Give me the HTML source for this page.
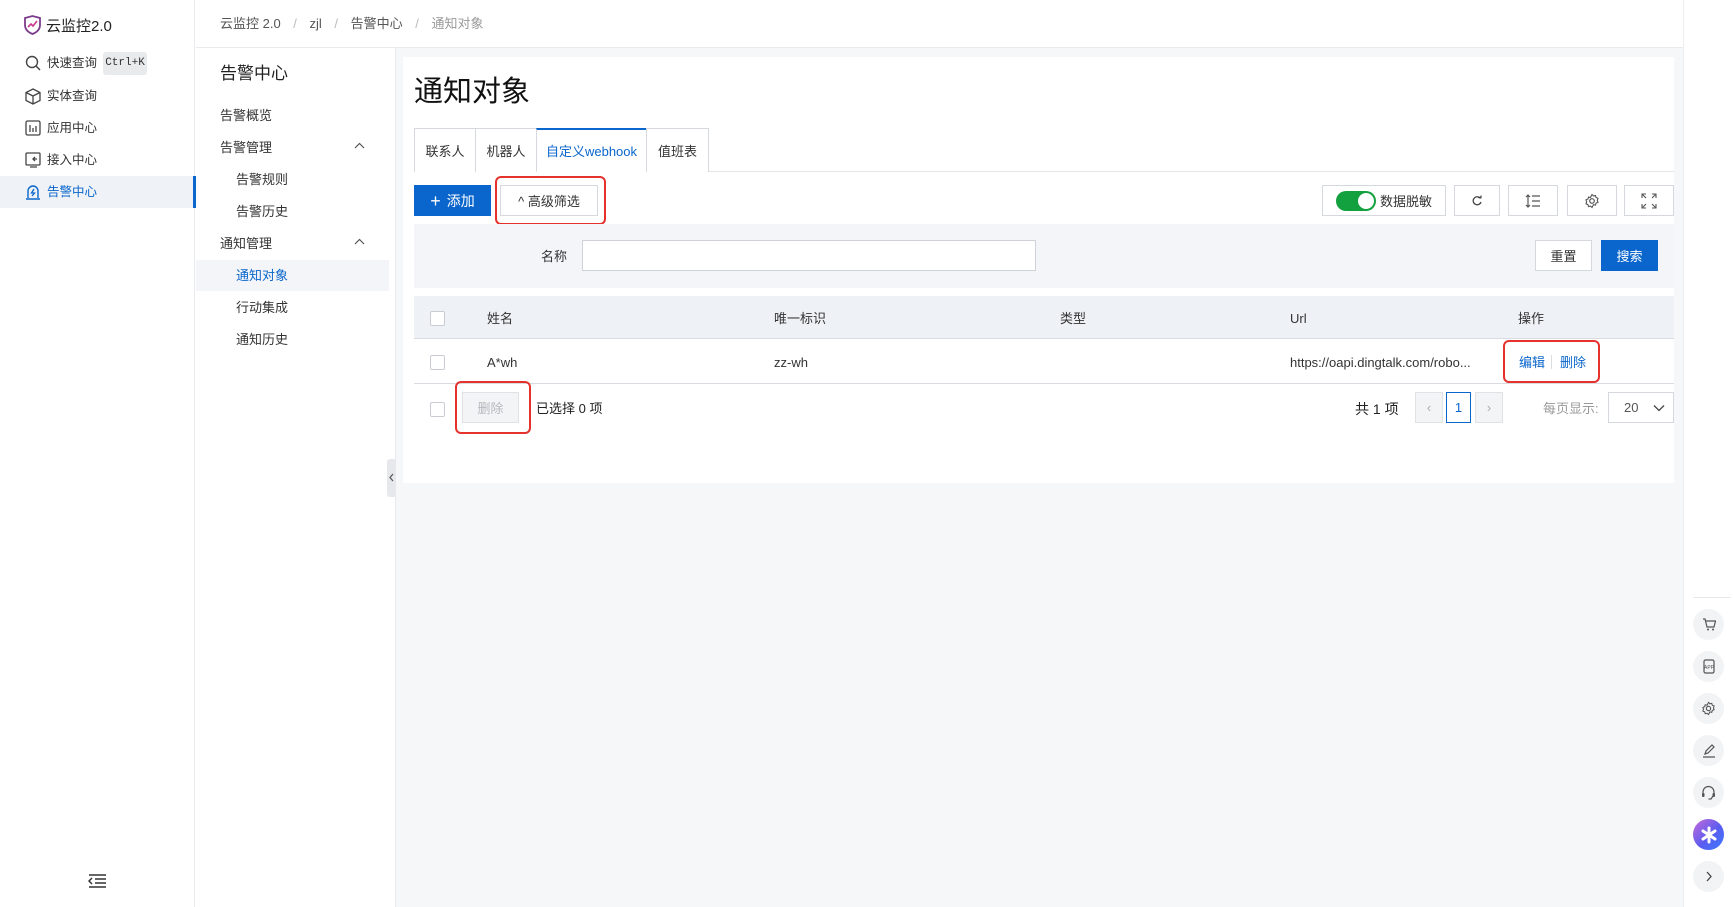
<!DOCTYPE html>
<html><head><meta charset="utf-8"><style>
*{box-sizing:border-box;margin:0;padding:0}
body{width:1733px;height:907px;overflow:hidden;background:#fff;font-family:"Liberation Sans","Noto Sans CJK SC",sans-serif;font-size:13px;color:#333;position:relative}
.a{position:absolute}
.t{position:absolute;white-space:nowrap;line-height:1}
.btn{position:absolute;border:1px solid #d5d8dd;background:#fff;display:flex;align-items:center;justify-content:center;font-size:13px;color:#333}
.red{position:absolute;border:2px solid #e5322d;border-radius:6px}
.cb{position:absolute;width:15px;height:15px;border:1px solid #c9ccd2;background:#fff;border-radius:2px}
.ri{position:absolute;left:1693px;width:31px;height:31px;border-radius:50%;background:#f2f3f5;display:flex;align-items:center;justify-content:center}
.sb{font-size:12.5px}
</style></head><body>
<!-- left sidebar -->
<div class="a" style="left:0;top:0;width:195px;height:907px;background:#fff;border-right:1px solid #e8eaed"></div>
<svg class="a" style="left:23px;top:15px" width="19" height="20" viewBox="0 0 19 20"><path d="M2 3 L9.5 1 L17 3 L17 10 Q17 16 9.5 19 Q2 16 2 10Z" fill="none" stroke="#7b3c8c" stroke-width="1.8"/><path d="M5 12 L8 9 L10 11 L14 6" fill="none" stroke="#c9398b" stroke-width="1.6"/></svg>
<div class="t" style="left:46px;top:19px;font-size:15px;color:#222">云监控2.0</div>
<svg class="a" style="left:25px;top:55px" width="16" height="16" viewBox="0 0 16 16"><circle cx="7" cy="7" r="5.5" fill="none" stroke="#444" stroke-width="1.4"/><path d="M11 11l4 4" stroke="#444" stroke-width="1.5"/></svg>
<div class="t sb" style="left:47px;top:57px">快速查询</div>
<div class="a" style="left:103px;top:52px;width:44px;height:23px;background:#e9eaec;border-radius:3px;font-family:'Liberation Mono',monospace;font-size:11px;line-height:23px;text-align:center">Ctrl+K</div>
<svg class="a" style="left:25px;top:88px" width="16" height="17" viewBox="0 0 16 17"><path d="M8 1L15 4.5V12.5L8 16L1 12.5V4.5Z M1 4.5L8 8L15 4.5 M8 8V16" fill="none" stroke="#444" stroke-width="1.3"/></svg>
<div class="t sb" style="left:47px;top:90px">实体查询</div>
<svg class="a" style="left:25px;top:120px" width="16" height="16" viewBox="0 0 16 16"><rect x="1" y="1" width="14" height="14" rx="1.5" fill="none" stroke="#444" stroke-width="1.3"/><path d="M5 5v7M8 8v4M11 6v6" stroke="#444" stroke-width="1.3"/></svg>
<div class="t sb" style="left:47px;top:122px">应用中心</div>
<svg class="a" style="left:25px;top:152px" width="17" height="16" viewBox="0 0 17 16"><rect x="1" y="1" width="14" height="12" rx="1" fill="none" stroke="#444" stroke-width="1.3"/><path d="M5 15h7M12 7H8M10 5l-2 2 2 2" fill="none" stroke="#444" stroke-width="1.3"/></svg>
<div class="t sb" style="left:47px;top:154px">接入中心</div>
<div class="a" style="left:0;top:176px;width:195px;height:32px;background:#eff2f7"></div>
<div class="a" style="left:193px;top:176px;width:3px;height:32px;background:#0a66cc"></div>
<svg class="a" style="left:25px;top:183px" width="16" height="18" viewBox="0 0 16 18"><path d="M3 15V8a5 5 0 0 1 10 0v7M1 16h14" fill="none" stroke="#0a66cc" stroke-width="1.4"/><path d="M9 6L6.5 10h3L7 13" fill="none" stroke="#0a66cc" stroke-width="1.3"/></svg>
<div class="t sb" style="left:47px;top:186px;color:#0a66cc">告警中心</div>
<svg class="a" style="left:88px;top:873px" width="19" height="16" viewBox="0 0 19 16"><path d="M1 2h17M7 6h11M7 10h11M1 14h17M4 5L1 8l3 3" fill="none" stroke="#333" stroke-width="1.5"/></svg>
<!-- top breadcrumb -->
<div class="a" style="left:196px;top:47px;width:1487px;height:1px;background:#e8eaed"></div>
<div class="t" style="left:220px;top:17px;color:#555">云监控 2.0 <span style="color:#bbb;margin:0 9px">/</span> zjl <span style="color:#bbb;margin:0 9px">/</span> 告警中心 <span style="color:#bbb;margin:0 9px">/</span> <span style="color:#999">通知对象</span></div>
<!-- second sidebar -->
<div class="a" style="left:395px;top:48px;width:1px;height:859px;background:#e8eaed"></div>
<div class="t" style="left:220px;top:65px;font-size:17px;color:#222">告警中心</div>
<div class="t" style="left:220px;top:109px">告警概览</div>
<div class="t" style="left:220px;top:141px">告警管理</div>
<svg class="a" style="left:354px;top:142px" width="11" height="7"><path d="M1 6l4.5-4.5L10 6" fill="none" stroke="#555" stroke-width="1.2"/></svg>
<div class="t" style="left:236px;top:173px">告警规则</div>
<div class="t" style="left:236px;top:205px">告警历史</div>
<div class="t" style="left:220px;top:237px">通知管理</div>
<svg class="a" style="left:354px;top:238px" width="11" height="7"><path d="M1 6l4.5-4.5L10 6" fill="none" stroke="#555" stroke-width="1.2"/></svg>
<div class="a" style="left:196px;top:260px;width:193px;height:31px;background:#f3f5f9"></div>
<div class="t" style="left:236px;top:269px;color:#0a66cc">通知对象</div>
<div class="t" style="left:236px;top:301px">行动集成</div>
<div class="t" style="left:236px;top:333px">通知历史</div>
<div class="a" style="left:387px;top:459px;width:9px;height:38px;background:#e6e8eb;border-radius:3px 0 0 3px"></div>
<svg class="a" style="left:388px;top:473px" width="7" height="9"><path d="M5 1L2 4.5L5 8" fill="none" stroke="#555" stroke-width="1.2"/></svg>
<!-- main bg -->
<div class="a" style="left:396px;top:48px;width:1287px;height:859px;background:#f6f7f9"></div>
<div class="a" style="left:403px;top:57px;width:1271px;height:426px;background:#fff"></div>
<div class="t" style="left:414px;top:78px;font-size:29px;color:#111">通知对象</div>
<!-- tabs -->
<div class="a" style="left:414px;top:171px;width:1260px;height:1px;background:#e3e5e8"></div>
<div class="btn" style="left:414px;top:128px;width:62px;height:44px;border-bottom:none">联系人</div>
<div class="btn" style="left:475px;top:128px;width:62px;height:44px;border-bottom:none">机器人</div>
<div class="btn" style="left:536px;top:128px;width:111px;height:44px;border-bottom:1px solid #fff;border-top:2px solid #0a66cc;color:#0a66cc">自定义webhook</div>
<div class="btn" style="left:646px;top:128px;width:63px;height:44px;border-bottom:none">值班表</div>
<!-- toolbar -->
<div class="btn" style="left:414px;top:185px;width:77px;height:31px;background:#0a66cc;border-color:#0a66cc;color:#fff;font-size:14px"><span style="font-size:18px;margin-right:6px;line-height:1">+</span>添加</div>
<div class="btn" style="left:500px;top:185px;width:98px;height:31px">^ 高级筛选</div>
<div class="red" style="left:495px;top:176px;width:111px;height:49px"></div>
<div class="btn" style="left:1322px;top:185px;width:124px;height:31px"><span style="display:inline-block;width:40px;height:20px;border-radius:10px;background:#13a03e;position:relative;margin-right:4px"><span style="position:absolute;right:2px;top:2px;width:16px;height:16px;border-radius:50%;background:#fff"></span></span>数据脱敏</div>
<div class="btn" style="left:1454px;top:185px;width:46px;height:31px"><svg width="12" height="12"><path d="M9.5 3.5A4 4 0 1 0 10 7" fill="none" stroke="#444" stroke-width="1.3"/><path d="M7 2.5h3v-2" fill="none" stroke="#444" stroke-width="1.2"/></svg></div>
<div class="btn" style="left:1508px;top:185px;width:50px;height:31px"><svg width="16" height="16"><path d="M3 2v12M1 4l2-2 2 2M1 12l2 2 2-2M7 3h8M7 8h8M7 13h8" fill="none" stroke="#555" stroke-width="1.2"/></svg></div>
<div class="btn" style="left:1567px;top:185px;width:50px;height:31px"><svg width="16" height="16" viewBox="0 0 16 16"><circle cx="8" cy="8" r="2.3" fill="none" stroke="#555" stroke-width="1.2"/><path d="M8 1.5l1.5 1.5 2-.5.5 2 2 .8-.7 2 .7 2-2 .8-.5 2-2-.5L8 14.5l-1.5-1.4-2 .5-.5-2-2-.8.7-2-.7-2 2-.8.5-2 2 .5Z" fill="none" stroke="#555" stroke-width="1.1"/></svg></div>
<div class="btn" style="left:1624px;top:185px;width:50px;height:31px"><svg width="16" height="16"><path d="M1 5V1h4M1 1l4 4M11 1h4v4M15 1l-4 4M1 11v4h4M1 15l4-4M15 11v4h-4M15 15l-4-4" fill="none" stroke="#555" stroke-width="1.1"/></svg></div>
<!-- filter -->
<div class="a" style="left:414px;top:224px;width:1260px;height:64px;background:#f3f5f9"></div>
<div class="t" style="left:541px;top:250px">名称</div>
<div class="a" style="left:582px;top:240px;width:454px;height:31px;background:#fff;border:1px solid #cfd3d9"></div>
<div class="btn" style="left:1535px;top:240px;width:57px;height:31px">重置</div>
<div class="btn" style="left:1601px;top:240px;width:57px;height:31px;background:#0a66cc;border-color:#0a66cc;color:#fff">搜索</div>
<!-- table -->
<div class="a" style="left:414px;top:296px;width:1260px;height:43px;background:#eef1f6;border-bottom:1px solid #d8dbe0"></div>
<div class="cb" style="left:430px;top:311px"></div>
<div class="t" style="left:487px;top:312px">姓名</div>
<div class="t" style="left:774px;top:312px">唯一标识</div>
<div class="t" style="left:1060px;top:312px">类型</div>
<div class="t" style="left:1290px;top:312px">Url</div>
<div class="t" style="left:1518px;top:312px">操作</div>
<div class="a" style="left:414px;top:383px;width:1260px;height:1px;background:#d8dbe0"></div>
<div class="cb" style="left:430px;top:355px"></div>
<div class="t" style="left:487px;top:356px">A*wh</div>
<div class="t" style="left:774px;top:356px">zz-wh</div>
<div class="t" style="left:1290px;top:356px">https://oapi.dingtalk.com/robo...</div>
<div class="t" style="left:1519px;top:356px;color:#0a66cc">编辑</div>
<div class="a" style="left:1551px;top:355px;width:1px;height:14px;background:#ddd"></div>
<div class="t" style="left:1560px;top:356px;color:#0a66cc">删除</div>
<div class="red" style="left:1503px;top:340px;width:97px;height:43px"></div>
<div class="cb" style="left:430px;top:402px"></div>
<div class="btn" style="left:462px;top:392px;width:57px;height:31px;background:#f3f4f6;color:#b5b8bd;border-color:#e0e2e5">删除</div>
<div class="red" style="left:455px;top:381px;width:76px;height:53px"></div>
<div class="t" style="left:536px;top:402px;color:#222">已选择 0 项</div>
<div class="t" style="left:1355px;top:402px;color:#222;font-size:14px">共 1 项</div>
<div class="btn" style="left:1415px;top:392px;width:28px;height:31px;background:#f3f4f6;border-color:#e0e2e5;color:#aaa">‹</div>
<div class="btn" style="left:1446px;top:392px;width:25px;height:31px;border-color:#0a66cc;color:#0a66cc">1</div>
<div class="btn" style="left:1475px;top:392px;width:28px;height:31px;background:#f3f4f6;border-color:#e0e2e5;color:#aaa">›</div>
<div class="t" style="left:1543px;top:402px;color:#999">每页显示:</div>
<div class="btn" style="left:1608px;top:392px;width:66px;height:31px;justify-content:flex-start;padding-left:15px;color:#555">20<svg style="position:absolute;right:8px;top:11px" width="12" height="8"><path d="M1 1.5l5 5 5-5" fill="none" stroke="#444" stroke-width="1.3"/></svg></div>
<!-- right rail -->
<div class="a" style="left:1683px;top:0;width:50px;height:907px;background:#fff;border-left:1px solid #eceef1"></div>
<div class="a" style="left:1693px;top:597px;width:38px;height:1px;background:#e6e8eb"></div>
<div class="ri" style="top:609px"><svg width="14" height="13"><path d="M1 1h2l2 8h7l1.5-6H4" fill="none" stroke="#555" stroke-width="1.2"/><circle cx="6" cy="11.5" r="1" fill="#555"/><circle cx="11" cy="11.5" r="1" fill="#555"/></svg></div>
<div class="ri" style="top:651px"><svg width="14" height="15"><rect x="2" y="1" width="10" height="13" rx="1.5" fill="none" stroke="#555" stroke-width="1.2"/><text x="7" y="10" font-size="5" text-anchor="middle" fill="#555" font-family="Liberation Sans">APP</text></svg></div>
<div class="ri" style="top:693px"><svg width="15" height="15" viewBox="0 0 16 16"><circle cx="8" cy="8" r="2.3" fill="none" stroke="#555" stroke-width="1.2"/><path d="M8 1.5l1.5 1.5 2-.5.5 2 2 .8-.7 2 .7 2-2 .8-.5 2-2-.5L8 14.5l-1.5-1.4-2 .5-.5-2-2-.8.7-2-.7-2 2-.8.5-2 2 .5Z" fill="none" stroke="#555" stroke-width="1.1"/></svg></div>
<div class="ri" style="top:735px"><svg width="14" height="14"><path d="M3 10l1-3 6-6 2 2-6 6zM1 13h12" fill="none" stroke="#555" stroke-width="1.2"/></svg></div>
<div class="ri" style="top:777px"><svg width="15" height="15"><path d="M2 9V7a5.5 5.5 0 0 1 11 0v2M7.5 14h2.5l2-3" fill="none" stroke="#555" stroke-width="1.2"/><rect x="1" y="8" width="2.5" height="4" rx="1" fill="#555"/><rect x="11.5" y="8" width="2.5" height="4" rx="1" fill="#555"/></svg></div>
<div class="ri" style="top:819px;background:linear-gradient(135deg,#c86ad9,#5a5cf0 55%,#3b7bff)"><svg width="18" height="18"><path d="M9 2v14M3 5l12 8M15 5L3 13" stroke="#fff" stroke-width="3" stroke-linecap="round"/></svg></div>
<div class="ri" style="top:861px"><svg width="8" height="11"><path d="M2 1l4 4.5L2 10" fill="none" stroke="#444" stroke-width="1.3"/></svg></div>
</body></html>
